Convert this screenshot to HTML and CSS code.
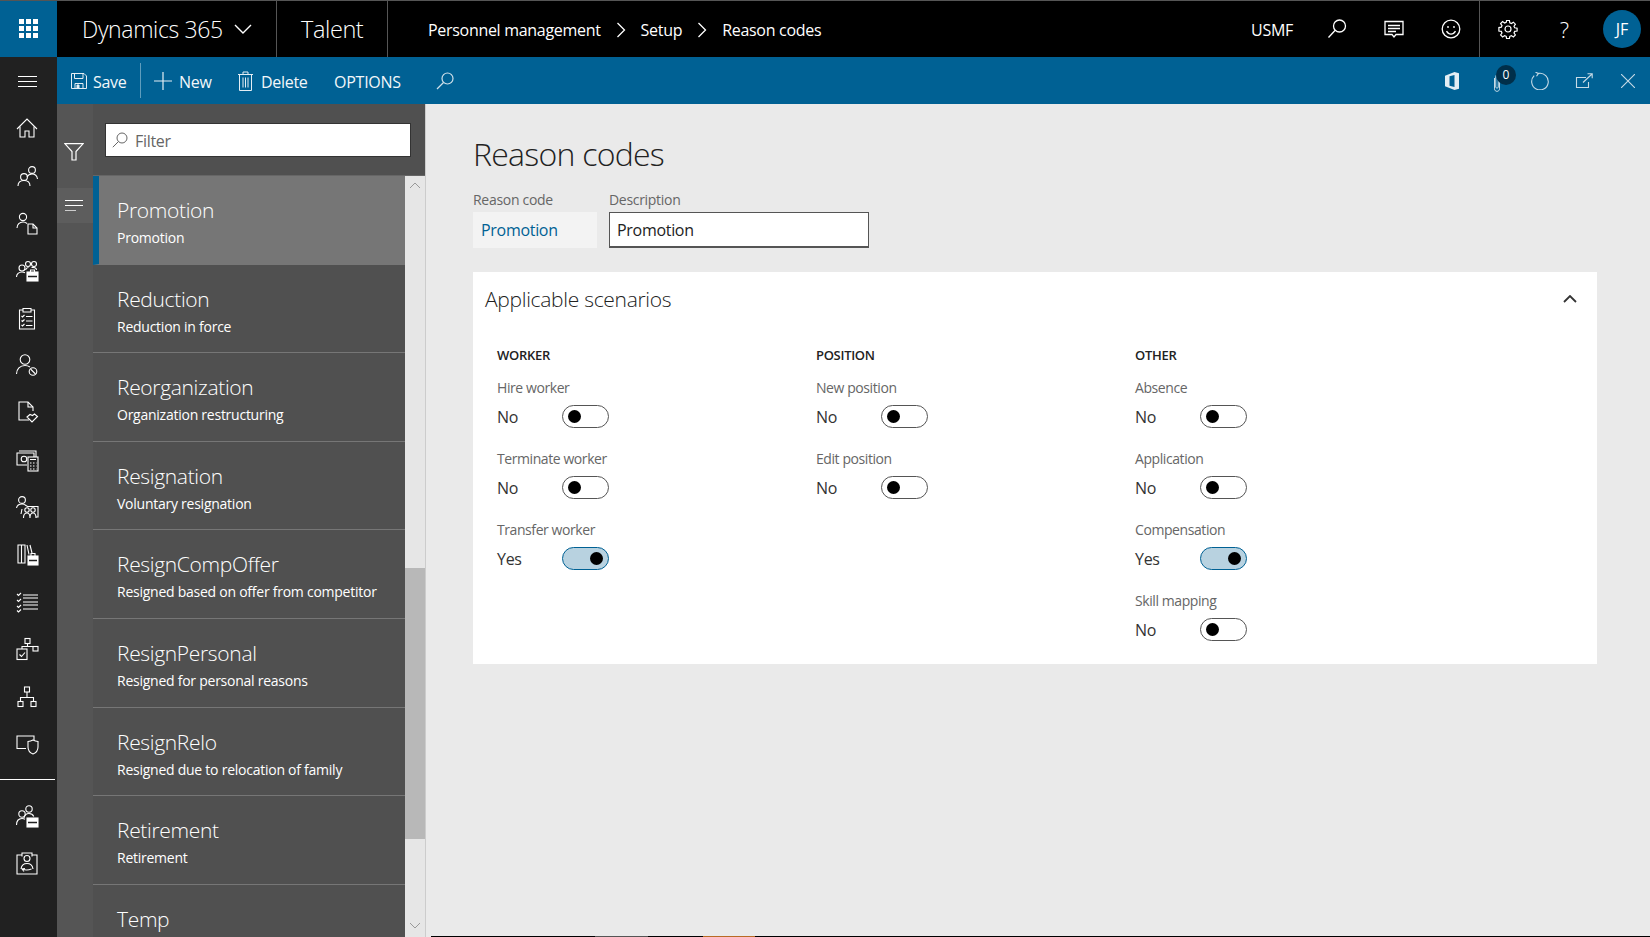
FILE: index.html
```html
<!DOCTYPE html>
<html lang="en">
<head>
<meta charset="utf-8">
<title>Reason codes</title>
<link rel="stylesheet" href="styles.css">
</head>
<body>
<div class="app">
  <header class="topbar">
    <div class="waffle">
      <svg width="20" height="20" viewBox="0 0 20 20" fill="#fff"><rect x="0" y="0" width="5" height="5"/><rect x="7" y="0" width="5" height="5"/><rect x="14" y="0" width="5" height="5"/><rect x="0" y="7" width="5" height="5"/><rect x="7" y="7" width="5" height="5"/><rect x="14" y="7" width="5" height="5"/><rect x="0" y="14" width="5" height="5"/><rect x="7" y="14" width="5" height="5"/><rect x="14" y="14" width="5" height="5"/></svg>
    </div>
    <div class="brand">
      <span class="brand-name">Dynamics 365</span>
      <svg class="brand-chev" width="18" height="10" viewBox="0 0 18 10" fill="none" stroke="#fff" stroke-width="1.4"><path d="M1 1l8 8 8-8"/></svg>
    </div>
    <div class="app-name">Talent</div>
    <nav class="crumbs">
      <span>Personnel management</span>
      <svg width="10" height="16" viewBox="0 0 10 16" fill="none" stroke="#fff" stroke-width="1.3"><path d="M1.5 1l7 7-7 7"/></svg>
      <span>Setup</span>
      <svg width="10" height="16" viewBox="0 0 10 16" fill="none" stroke="#fff" stroke-width="1.3"><path d="M1.5 1l7 7-7 7"/></svg>
      <span>Reason codes</span>
    </nav>
    <div class="top-right">
      <span class="company">USMF</span>
      <span class="top-btn"><svg width="20" height="20" viewBox="0 0 20 20" fill="none" stroke="#fff" stroke-width="1.3"><circle cx="12.5" cy="7" r="6"/><path d="M8.2 11.3L1.5 18.5"/></svg></span>
      <span class="top-btn"><svg width="20" height="20" viewBox="0 0 20 20" fill="none" stroke="#fff" stroke-width="1.3"><path d="M1 2.5h18v13h-7l-2 2.5-2-2.5H1z"/><path d="M4 6.5h12M4 9.5h12M4 12.5h8"/></svg></span>
      <span class="top-btn top-btn-last"><svg width="20" height="20" viewBox="0 0 20 20" fill="none" stroke="#fff" stroke-width="1.3"><circle cx="10" cy="10" r="8.8"/><circle cx="7" cy="8" r=".9" fill="#fff" stroke="none"/><circle cx="13" cy="8" r=".9" fill="#fff" stroke="none"/><path d="M5.5 12.2c1.2 2 2.8 3 4.5 3s3.3-1 4.5-3"/></svg></span>
      <span class="top-btn top-btn-sep"><svg width="20" height="20" viewBox="0 0 20 20" fill="none" stroke="#fff" stroke-width="1.2"><circle cx="10" cy="10" r="3"/><path d="M8.6 1.5h2.8l.4 2.4 1.6.7 2-1.4 2 2-1.4 2 .7 1.6 2.4.4v2.8l-2.4.4-.7 1.6 1.4 2-2 2-2-1.4-1.6.7-.4 2.4H8.6l-.4-2.4-1.6-.7-2 1.4-2-2 1.4-2-.7-1.6-2.4-.4V8.6l2.4-.4.7-1.6-1.4-2 2-2 2 1.4 1.6-.7z"/></svg></span>
      <span class="top-btn help">?</span>
      <span class="avatar">JF</span>
    </div>
  </header>

  <div class="body">
    <aside class="rail">
      <div class="rail-btn rail-btn-burger"><svg width="20" height="11" viewBox="0 0 20 11" fill="#fff"><rect width="19" height="1"/><rect y="5" width="19" height="1"/><rect y="10" width="19" height="1"/></svg></div>
      <div class="rail-btn"><svg class="ico" viewBox="0 0 24 24"><path d="M2 13l10-10 10 10"/><path d="M5 10.5V21h5v-6h4v6h5V10.5"/></svg></div>
      <div class="rail-btn"><svg class="ico" viewBox="0 0 24 24"><circle cx="9" cy="14" r="3.4"/><path d="M3 23c0-3.5 2.6-5.5 6-5.5s6 2 6 5.5"/><circle cx="17" cy="7" r="3.4"/><path d="M12 14c1-2 3-3 5-3 3 0 5 1.5 5.5 5"/></svg></div>
      <div class="rail-btn"><svg class="ico" viewBox="0 0 24 24"><circle cx="8" cy="6" r="3.6"/><path d="M2 17c0-3.5 2.6-6 6-6 1.5 0 3 .5 4 1.5"/><path d="M13 13h5l4 4v6h-9z" fill="#212121"/><path d="M18 13v4h4"/></svg></div>
      <div class="rail-btn"><svg class="ico" viewBox="0 0 24 24"><circle cx="7" cy="10" r="3"/><path d="M1.5 19c0-3 2.300-5 5.500-5 1 0 2 .2 3 .7"/><circle cx="13" cy="6" r="2.500"/><circle cx="19" cy="6" r="2.500"/><path d="M10.500 12c.5-1.500 1.500-2.500 3-2.500M16.500 9.500c2.500-.5 5 .5 5 2.500"/><rect x="12" y="14" width="11" height="9" fill="#fff"/><path d="M15.500 14v-2h4v2"/><path d="M13 18.500h9" stroke="#212121" stroke-width="1.500"/></svg></div>
      <div class="rail-btn"><svg class="ico" viewBox="0 0 24 24"><path d="M8 4H4.500v19h15V4H16"/><path d="M8 2.500h8V6H8z"/><path d="M6.500 10l1 1 2-2M6.500 14.500l1 1 2-2M6.500 19l1 1 2-2"/><path d="M11 10.500h6.500M11 15h6.500M11 19.500h6.500"/></svg></div>
      <div class="rail-btn"><svg class="ico" viewBox="0 0 24 24"><circle cx="10" cy="6.500" r="4.800"/><path d="M1.500 21c0-5 3.500-8.500 8.500-8.500 2 0 3.500.5 5 1.500"/><circle cx="18" cy="18.500" r="3.800"/><path d="M15.500 16l5 5"/></svg></div>
      <div class="rail-btn"><svg class="ico" viewBox="0 0 24 24"><path d="M14 20H4V2h9l5 5v4"/><path d="M13 2v5h5"/><path d="M12 17l3-2.500 2.500 1 2-1.500 3 2.500-5.500 5.500z"/></svg></div>
      <div class="rail-btn"><svg class="ico" viewBox="0 0 24 24"><path d="M12 17H2V5h17v4"/><path d="M4 3h17v6"/><circle cx="9" cy="11" r="2.800"/><rect x="13" y="9" width="10" height="14" fill="#212121"/><path d="M15 11.500h6M15 15h1.500M18 15h1.500M21 15h.5M15 18h1.500M18 18h1.500M21 18h.5M15 21h1.500M18 21h1.500M21 21h.5"/></svg></div>
      <div class="rail-btn"><svg class="ico" viewBox="0 0 24 24"><circle cx="7" cy="5" r="3.400"/><path d="M1.500 13c.5-2.500 3-4 5.500-4 1.500 0 3 .5 4 1.500l1.500 1H23V22h-2"/><circle cx="12" cy="15" r="2.200"/><circle cx="18" cy="15" r="2.200"/><path d="M8.500 23c0-3 1.300-5 3.500-5s3 2 3 5M15 23c0-3 1-5 3-5s3 2 3 5"/><path d="M7 14l-1 5"/></svg></div>
      <div class="rail-btn"><svg class="ico" viewBox="0 0 24 24"><path d="M3 2h3.500v18H3zM6.500 2H10v18H6.500z"/><path d="M12 2l2 9.500M15 2l2 8"/><rect x="13" y="13" width="10" height="9" fill="#fff"/><path d="M16 13v-2.500h4V13"/><path d="M14 17.500h8" stroke="#212121" stroke-width="1.500"/></svg></div>
      <div class="rail-btn"><svg class="ico" viewBox="0 0 24 24"><path d="M8 5h15M8 8h15M8 12h15M8 15h15M8 19h15"/><path d="M2 4l1.500 1.500L6 3M2 10l1.500 1.500L6 9M2 16l1.500 1.500L6 15M2 20.500l1.500 1.500L6 19.500"/></svg></div>
      <div class="rail-btn"><svg class="ico" viewBox="0 0 24 24"><rect x="10" y="1.500" width="5" height="5"/><rect x="18" y="9.500" width="5" height="4.500"/><path d="M12.500 6.500V9.500M7 12V9.500H20.500"/><rect x="2" y="12" width="10" height="10.500"/><path d="M4.500 17.500l2 2 3.500-4"/></svg></div>
      <div class="rail-btn"><svg class="ico" viewBox="0 0 24 24"><rect x="9.500" y="2" width="5" height="5"/><rect x="3" y="16.500" width="5" height="5"/><rect x="16" y="16.500" width="5" height="5"/><path d="M12 7v5.500M5.500 16.500v-4H18.500v4"/></svg></div>
      <div class="rail-btn"><svg class="ico" viewBox="0 0 24 24"><path d="M11 16.500H2V4h17v4"/><path d="M13 9.500c2-.2 3.500-.7 5-1.500 1.500.8 3 1.300 5 1.500V15c0 3.500-2.500 6-5 7-2.500-1-5-3.500-5-7z"/></svg></div>
      <hr class="rail-rule">
      <div class="rail-btn"><svg class="ico" viewBox="0 0 24 24"><circle cx="7" cy="10" r="3.200"/><path d="M1.500 21c0-4 2.300-6.500 5.500-6.500 1.200 0 2.200.3 3 .8"/><circle cx="14" cy="5" r="3.200"/><path d="M9 14c.5-2.500 2.500-4.500 5-4.500 2.200 0 4 1.200 4.800 3"/><rect x="12" y="14" width="11" height="9" fill="#fff"/><path d="M13 18.500h9" stroke="#212121" stroke-width="1.500"/></svg></div>
      <div class="rail-btn"><svg class="ico" viewBox="0 0 24 24"><path d="M7 4H2v19h20V4h-5"/><path d="M7 5.500V2h10v3.500"/><circle cx="12" cy="7.500" r="3"/><path d="M6 18c.5-3.500 3-5.500 6-5.500s5.500 2 6 5.500"/><path d="M9 20.500l-2-2.500 3-.5M7.500 18c2 1 5 1.500 9 0"/></svg></div>
    </aside>

    <div class="main">
      <div class="cmdbar">
        <div class="cmd cmd-save">
          <svg width="16" height="16" viewBox="0 0 16 16" fill="none" stroke="#e4eef4" stroke-width="1"><path d="M.5.5h12.500l2.500 2.500v12.500H.5z"/><path d="M3.500.5v5h8.500v-5M4 15.500v-5h8v5"/><path d="M6 12h2v3.500H6z" fill="#e4eef4"/></svg>
          <span>Save</span>
        </div>
        <div class="cmd cmd-new">
          <svg width="18" height="18" viewBox="0 0 18 18" stroke="#e4eef4" stroke-width="1.2"><path d="M9 0v18M0 9h18"/></svg>
          <span>New</span>
        </div>
        <div class="cmd cmd-delete">
          <svg width="15" height="20" viewBox="0 0 15 20" fill="none" stroke="#e4eef4" stroke-width="1"><path d="M0 3.500h15M5 3.500V1h5v2.500M1.500 3.500v16h12v-16"/><path d="M5 6.500v10M7.500 6.500v10M10 6.500v10"/></svg>
          <span>Delete</span>
        </div>
        <div class="cmd cmd-options"><span>OPTIONS</span></div>
        <div class="cmd-search">
          <svg width="18" height="18" viewBox="0 0 18 18" fill="none" stroke="#cfe0ea" stroke-width="1.2"><circle cx="11.500" cy="6.500" r="5.500"/><path d="M7.500 10.500L1 17"/></svg>
        </div>
        <div class="cmd-right">
          <span class="cr-btn"><svg width="16" height="18" viewBox="0 0 16 18" fill="#e4eef4" fill-rule="evenodd"><path d="M1 3.800L10.500 0 15 1.300V16.700L10.500 18 1 14.200zM10.500 3L5.500 4.200V13.800L10.500 15z"/></svg></span>
          <span class="cr-btn cr-clip">
            <svg class="clip-ico" width="10" height="20" viewBox="0 0 12 24" fill="none" stroke="#c7dbe6" stroke-width="1.200"><path d="M3 6v13c0 4 6 4 6 0V4.500C9 1 4.500 1 4.500 4.500V17c0 1.500 3 1.500 3 0V6"/></svg>
            <span class="badge">0</span>
          </span>
          <span class="cr-btn"><svg width="18" height="18" viewBox="0 0 18 18" fill="none" stroke="#c7dbe6" stroke-width="1.100"><path d="M7.500 1.400A8.300 8.300 0 1 1 3.200 3.600"/><path d="M4.500.2L7.500 1.400 5.500 4.200"/></svg></span>
          <span class="cr-btn"><svg width="18" height="16" viewBox="0 0 18 16" fill="none" stroke="#c7dbe6" stroke-width="1.100"><path d="M11 4.500H1.500v10h12V9"/><path d="M8 9.500L17 1M12.500.8H17.200v4.500"/></svg></span>
          <span class="cr-btn"><svg width="14" height="14" viewBox="0 0 14 14" stroke="#c7dbe6" stroke-width="1.100"><path d="M0 0l14 14M14 0L0 14"/></svg></span>
        </div>
      </div>

      <div class="workspace">
        <section class="pane">
          <div class="pane-side">
            <div class="side-funnel"><svg width="20" height="18" viewBox="0 0 20 18" fill="none" stroke="#fff" stroke-width="1.2"><path d="M.8.600h18.400L12 8.500V17H8V8.500z"/></svg></div>
            <div class="side-lines"><svg width="18" height="11" viewBox="0 0 18 11" fill="#fff"><rect width="18" height="1"/><rect y="5" width="18" height="1"/><rect y="10" width="11" height="1" fill="#ccc"/></svg></div>
          </div>
          <div class="pane-body">
            <div class="pane-head">
              <div class="filter">
                <svg width="16" height="16" viewBox="0 0 16 16" fill="none" stroke="#666" stroke-width="1"><circle cx="10" cy="6" r="5"/><path d="M6.500 9.500L.8 15.200"/></svg>
                <span class="filter-text">Filter</span>
              </div>
            </div>
            <div class="list-wrap">
              <ul class="list">
                <li class="item selected"><div class="item-title">Promotion</div><div class="item-sub">Promotion</div></li>
                <li class="item"><div class="item-title">Reduction</div><div class="item-sub">Reduction in force</div></li>
                <li class="item"><div class="item-title">Reorganization</div><div class="item-sub">Organization restructuring</div></li>
                <li class="item"><div class="item-title">Resignation</div><div class="item-sub">Voluntary resignation</div></li>
                <li class="item"><div class="item-title">ResignCompOffer</div><div class="item-sub">Resigned based on offer from competitor</div></li>
                <li class="item"><div class="item-title">ResignPersonal</div><div class="item-sub">Resigned for personal reasons</div></li>
                <li class="item"><div class="item-title">ResignRelo</div><div class="item-sub">Resigned due to relocation of family</div></li>
                <li class="item"><div class="item-title">Retirement</div><div class="item-sub">Retirement</div></li>
                <li class="item"><div class="item-title">Temp</div></li>
              </ul>
              <div class="scrollbar">
                <svg class="sb-up" width="12" height="7" viewBox="0 0 12 7" fill="none" stroke="#999" stroke-width="1"><path d="M1 6l5-5 5 5"/></svg>
                <div class="sb-thumb"></div>
                <svg class="sb-down" width="12" height="7" viewBox="0 0 12 7" fill="none" stroke="#999" stroke-width="1"><path d="M1 1l5 5 5-5"/></svg>
              </div>
            </div>
          </div>
        </section>

        <main class="content">
          <h1 class="page-title">Reason codes</h1>
          <div class="head-fields">
            <div class="hf hf-code">
              <label class="hf-label">Reason code</label>
              <div class="hf-code-value">Promotion</div>
            </div>
            <div class="hf hf-desc">
              <label class="hf-label">Description</label>
              <div class="hf-desc-value">Promotion</div>
            </div>
          </div>
          <section class="card">
            <div class="card-head">
              <h2 class="card-title">Applicable scenarios</h2>
              <svg width="14" height="8" viewBox="0 0 14 8" fill="none" stroke="#333" stroke-width="1.800"><path d="M1 7l6-6 6 6"/></svg>
            </div>
            <div class="cols">
              <div class="col">
                <h3 class="col-title">WORKER</h3>
                <div class="field"><div class="f-label">Hire worker</div><div class="f-row"><span class="f-val">No</span><span class="toggle"></span></div></div>
                <div class="field"><div class="f-label">Terminate worker</div><div class="f-row"><span class="f-val">No</span><span class="toggle"></span></div></div>
                <div class="field"><div class="f-label">Transfer worker</div><div class="f-row"><span class="f-val">Yes</span><span class="toggle on"></span></div></div>
              </div>
              <div class="col">
                <h3 class="col-title">POSITION</h3>
                <div class="field"><div class="f-label">New position</div><div class="f-row"><span class="f-val">No</span><span class="toggle"></span></div></div>
                <div class="field"><div class="f-label">Edit position</div><div class="f-row"><span class="f-val">No</span><span class="toggle"></span></div></div>
              </div>
              <div class="col">
                <h3 class="col-title">OTHER</h3>
                <div class="field"><div class="f-label">Absence</div><div class="f-row"><span class="f-val">No</span><span class="toggle"></span></div></div>
                <div class="field"><div class="f-label">Application</div><div class="f-row"><span class="f-val">No</span><span class="toggle"></span></div></div>
                <div class="field"><div class="f-label">Compensation</div><div class="f-row"><span class="f-val">Yes</span><span class="toggle on"></span></div></div>
                <div class="field"><div class="f-label">Skill mapping</div><div class="f-row"><span class="f-val">No</span><span class="toggle"></span></div></div>
              </div>
            </div>
          </section>
          <div class="edge-strip"></div>
        </main>
      </div>
    </div>
  </div>
</div>
</body>
</html>
```

FILE: styles.css
```css
* { box-sizing: border-box; }
html, body { margin: 0; padding: 0; height: 100%; overflow: hidden; }
body { font-family: "Open Sans", "Noto Sans", sans-serif; color: #333; background: #eaeaea; }
h1, h2, h3 { margin: 0; font-weight: 400; }
ul { margin: 0; padding: 0; list-style: none; }

.app { display: flex; flex-direction: column; height: 937px; width: 1650px; overflow: hidden; }

/* top bar */
.topbar { flex: none; height: 57px; background: #000; border-top: 1px solid #555; display: flex; align-items: stretch; color: #fff; }
.waffle { width: 57px; background: #006194; display: flex; align-items: center; justify-content: center; }
.brand { width: 220px; display: flex; align-items: center; padding-left: 25px; border-right: 1px solid #555; }
.brand-name { font-size: 23px; font-weight: 300; letter-spacing: -.35px; }
.brand-chev { margin-left: 11px; }
.app-name { width: 111px; display: flex; align-items: center; padding: 0 0 1px 24px; border-right: 1px solid #555; font-size: 23.5px; font-weight: 300; letter-spacing: -.4px; }
.crumbs { display: flex; align-items: center; padding: 1px 0 0 40px; font-size: 16px; letter-spacing: -.3px; gap: 15px; }
.top-right { margin-left: auto; display: flex; align-items: center; }
.company { font-size: 16px; letter-spacing: -.3px; margin-right: 15px; padding-top: 2px; }
.top-btn { width: 57px; height: 100%; display: flex; align-items: center; justify-content: center; }
.top-btn-sep { border-left: 1px solid #555; }
.help { font-size: 22px; font-weight: 300; }
.avatar { width: 38px; height: 38px; border-radius: 50%; background: #006194; font-size: 16px; display: flex; align-items: center; justify-content: center; margin: 0 9px 0 10px; }

.body { flex: 1; display: flex; min-height: 0; }

/* rail */
.rail { flex: none; width: 57px; background: #212121; display: flex; flex-direction: column; }
.rail-btn { flex: none; height: 47.4px; display: flex; align-items: center; justify-content: center; padding-right: 3px; }
.rail-btn-burger { padding-top: 2px; padding-right: 1px; }
.ico { width: 24px; height: 24px; fill: none; stroke: #fff; stroke-width: 1.1; }
.rail-rule { width: 55px; height: 1px; border: 0; background: #fff; margin: 11px 0 12px; flex: none; }

.main { flex: 1; display: flex; flex-direction: column; min-width: 0; }

/* command bar */
.cmdbar { flex: none; height: 47px; background: #006194; color: #f2f7fa; display: flex; align-items: center; font-size: 16px; letter-spacing: -.3px; }
.cmd { display: flex; align-items: center; height: 35px; }
.cmd span { padding-top: 2px; }
.cmd-save { width: 84px; padding-left: 14px; gap: 6px; border-right: 1px solid #5f9dbd; }
.cmd-new { margin-left: 13px; gap: 7px; width: 84px; }
.cmd-delete { gap: 8px; width: 96px; }
.cmd-options { width: 102px; letter-spacing: -.25px; }
.cmd-search { display: flex; align-items: center; }
.cmd-right { margin-left: auto; display: flex; align-items: center; }
.cr-btn { width: 44px; display: flex; align-items: center; justify-content: center; position: relative; }
.cr-clip { justify-content: flex-start; padding-left: 18px; }
.clip-ico { margin-top: 4px; }
.badge { position: absolute; left: 22px; top: -3.5px; width: 20px; height: 20px; border-radius: 50%; background: #002f4a; color: #fff; font-size: 12px; letter-spacing: 0; text-align: center; line-height: 20px; }

/* workspace */
.workspace { flex: 1; display: flex; min-height: 0; }
.pane { flex: none; width: 369px; display: flex; background: #505050; border-right: 1px solid #ccc; }
.pane-side { flex: none; width: 36px; background: #555; }
.side-funnel { height: 84px; display: flex; align-items: flex-end; justify-content: center; padding-bottom: 27px; padding-right: 2px; }
.side-lines { height: 35px; background: #5d5d5d; display: flex; align-items: center; justify-content: center; padding-right: 2px; padding-bottom: 1px; }
.pane-body { flex: 1; display: flex; flex-direction: column; min-width: 0; }
.pane-head { flex: none; height: 72px; padding: 19px 14px 0 12px; border-bottom: 1px solid #666; }
.filter { height: 34px; background: #fff; border: 1px solid #333; display: flex; align-items: center; padding-left: 6px; gap: 7px; color: #666; font-size: 16px; letter-spacing: -.3px; }
.filter-text { padding-top: 2px; }
.list-wrap { flex: 1; display: flex; min-height: 0; }
.list { flex: 1; min-width: 0; overflow: hidden; }
.item { height: 88.6px; padding: 18px 0 0 24px; border-bottom: 1px solid #767676; color: #fff; }
.item.selected { background: #767676; border-left: 6px solid #006194; padding-left: 18px; }
.item-title { font-size: 21px; line-height: 32px; font-weight: 300; letter-spacing: -.33px; }
.item-sub { font-size: 14px; line-height: 20px; margin-top: 2px; letter-spacing: -.25px; }
.scrollbar { flex: none; width: 20px; background: #e6e6e6; display: flex; flex-direction: column; align-items: center; }
.sb-up { margin-top: 6px; flex: none; }
.sb-thumb { flex: none; width: 100%; height: 271px; background: #b8b8b8; margin-top: 379px; }
.sb-down { flex: none; margin-top: 83px; }

/* content */
.content { flex: 1; min-width: 0; padding: 28px 53px 0 47px; background: #eaeaea; display: flex; flex-direction: column; }
.page-title { font-size: 32px; line-height: 44px; font-weight: 300; color: #222; letter-spacing: -.75px; }
.head-fields { display: flex; gap: 12px; margin-top: 14px; }
.hf-label { display: block; font-size: 14px; line-height: 20px; color: #666; letter-spacing: -.3px; margin-bottom: 2px; }
.hf-code { width: 124px; }
.hf-desc { width: 260px; }
.hf-code-value { height: 36px; background: #f3f3f3; color: #006194; font-size: 16px; line-height: 37px; padding-left: 8px; letter-spacing: -.3px; }
.hf-desc-value { height: 36px; background: #fff; border: 1px solid #555; border-bottom-width: 2px; font-size: 16px; line-height: 35px; padding-left: 7px; color: #222; letter-spacing: -.3px; }

.card { flex: none; margin-top: 24px; height: 392px; background: #fff; }
.card-head { height: 56px; padding: 0 20px 2px 12px; display: flex; align-items: center; justify-content: space-between; }
.card-title { font-size: 21px; font-weight: 300; color: #222; letter-spacing: -.3px; }
.cols { display: flex; padding: 17px 0 0 24px; }
.col { flex: none; width: 319px; }
.col-title { font-size: 13px; line-height: 20px; font-weight: 600; color: #222; letter-spacing: -.3px; margin-bottom: 13px; }
.field { height: 71px; }
.f-label { font-size: 14px; line-height: 20px; color: #666; letter-spacing: -.42px; margin-bottom: 7px; }
.f-row { display: flex; align-items: center; height: 24px; }
.f-val { width: 65px; font-size: 16px; line-height: 24px; color: #333; letter-spacing: -.3px; }
.toggle { width: 47px; height: 23px; border: 1px solid #555; border-radius: 12px; background: #fff; display: flex; align-items: center; padding-left: 5px; margin-top: -1px; }
.toggle::after { content: ""; width: 13px; height: 13px; border-radius: 50%; background: #000; }
.toggle.on { background: #b8d2e0; border: 1.5px solid #006194; justify-content: flex-end; padding: 0 5px 0 0; }

.edge-strip { flex: none; height: 1px; margin: auto -53px 0 -42px; background: linear-gradient(to right, #000 164px, #555 164px, #555 217px, #000 217px, #000 272px, #b86b24 272px, #b86b24 324px, #000 324px); }
```
